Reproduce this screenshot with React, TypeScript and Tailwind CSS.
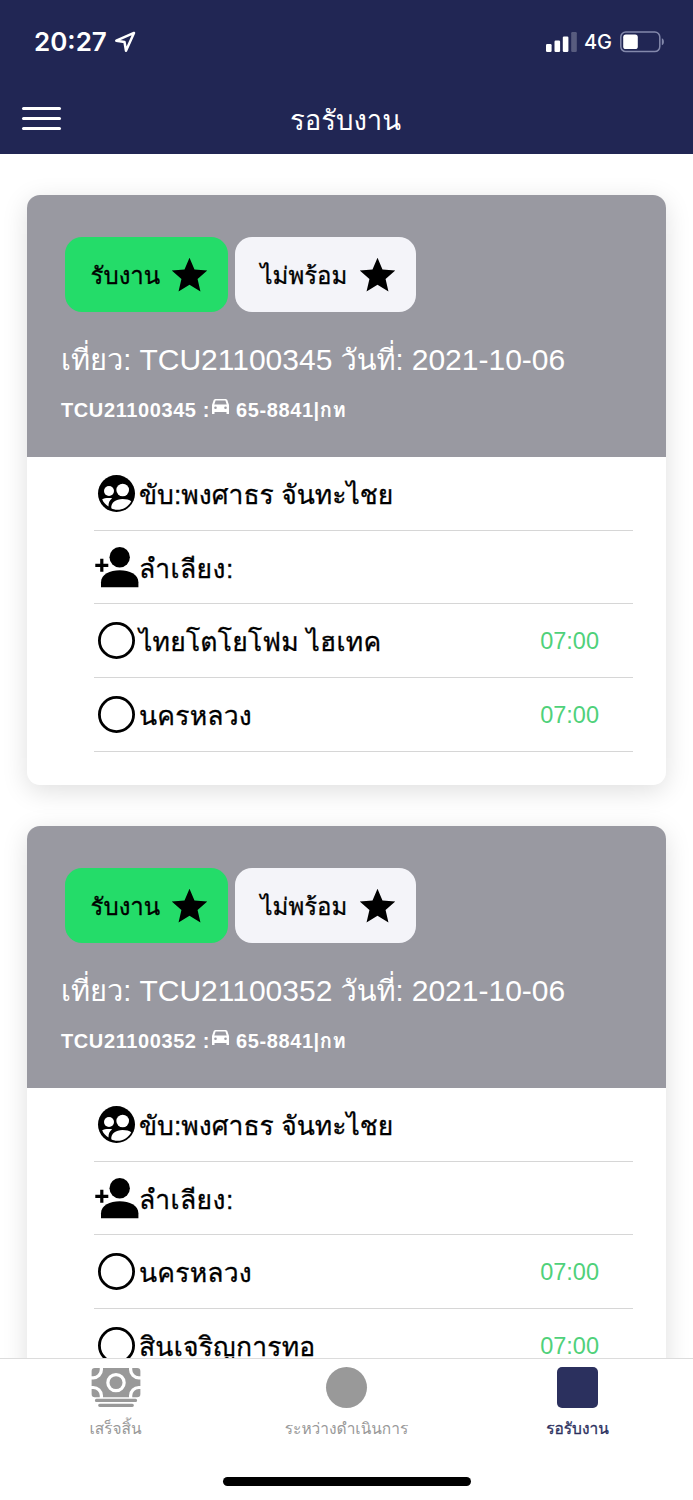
import React from "react";
import { IoMdStar } from "react-icons/io";
import { IoCash } from "react-icons/io5";

interface Stop {
  name: string;
  time: string;
}

interface Job {
  trip: string;
  date: string;
  plate: string;
  driver: string;
  stops: Stop[];
}

const jobs: Job[] = [
  {
    trip: "TCU21100345",
    date: "2021-10-06",
    plate: "65-8841|กท",
    driver: "พงศาธร จันทะไชย",
    stops: [
      { name: "ไทยโตโยโฟม ไฮเทค", time: "07:00" },
      { name: "นครหลวง", time: "07:00" },
    ],
  },
  {
    trip: "TCU21100352",
    date: "2021-10-06",
    plate: "65-8841|กท",
    driver: "พงศาธร จันทะไชย",
    stops: [
      { name: "นครหลวง", time: "07:00" },
      { name: "สินเจริญการทอ", time: "07:00" },
    ],
  },
];

function DriverIcon() {
  return (
    <svg className="size-[45px] shrink-0" viewBox="0 0 45 45">
      <circle cx="22.5" cy="22.5" r="18.5" fill="black" />
      <g fill="white">
        <circle cx="28.7" cy="19" r="6.3" />
        <circle cx="15" cy="20" r="5" />
        <path d="M8.2 28.3c2-1.2 6.2-1.8 10-1-2.8 2-3.8 4.7-3.7 8.200-3-1.700-5.200-4.200-6.300-7.200z" />
        <path d="M17.300 37.300c-.6-5.800 4.700-9.300 11.200-9.300 3.800 0 7 .8 8.700 2.200-2.800 5.400-7.600 8.400-13.700 8.600-2.300.1-4.300-.5-6.200-1.500z" />
      </g>
    </svg>
  );
}

function HelperIcon() {
  return (
    <svg className="size-[45px] shrink-0" viewBox="0 0 45 45" fill="black">
      <circle cx="25.7" cy="12.2" r="10.2" />
      <path d="M7 42.2v-5c0-8 9-12 18.700-12s18.700 4 18.700 12v5z" />
      <path d="M6.200 13.800h3.200v4.900h4.900v3.200H9.400v4.900H6.200v-4.900H1.300v-3.200h4.900z" />
    </svg>
  );
}

function CarIcon() {
  return (
    <svg className="mb-[6px] ml-[2px] h-[15px] w-[17px]" viewBox="0 0 17 15" fill="white" fillRule="evenodd">
      <path d="M3.200 0h10.600l1.400.8L17 6v9h-2.500v-2h-12v2H0V6L1.800.8zM3.600 1.600 2.300 5.500h12.400l-1.300-3.900zM3.500 7.500a1.300 1.300 0 1 0 0 2.600 1.300 1.300 0 0 0 0-2.600zm10 0a1.300 1.300 0 1 0 0 2.600 1.300 1.300 0 0 0 0-2.600z" />
    </svg>
  );
}

function StatusBar() {
  return (
    <div className="flex h-[84px] items-center pl-[34px] pr-[28px] text-white">
      <span className="font-[Inter] text-[26px] font-semibold leading-none">20:27</span>
      <svg className="ml-[7px] size-[22px]" viewBox="0 0 22 22" fill="none" stroke="white" strokeWidth="2.5" strokeLinejoin="round">
        <path d="M20 1.900 2.300 9.700l8.200 1.300 1.500 8.700z" />
      </svg>
      <div className="ml-auto flex items-center">
        <svg className="h-[20px] w-[31px]" viewBox="0 0 31 20" fill="white">
          <rect x="0" y="12" width="5.6" height="8" rx="1.2" />
          <rect x="8.5" y="8.5" width="5.6" height="11.5" rx="1.2" />
          <rect x="16.8" y="4.5" width="5.6" height="15.5" rx="1.2" />
          <rect x="25.2" y="0" width="5.6" height="20" rx="1.2" opacity=".25" />
        </svg>
        <span className="ml-[7px] font-[Inter] text-[20px] font-medium leading-none">4G</span>
        <svg className="ml-[8px] h-[22px] w-[45px]" viewBox="0 0 45 22">
          <rect x=".8" y="1" width="39" height="19.6" rx="5" fill="none" stroke="#8388ab" strokeWidth="1.5" />
          <rect x="3.2" y="3.6" width="14.6" height="14.4" rx="2.6" fill="white" />
          <path d="M41.8 7.3c2.8.8 2.8 6.2 0 7z" fill="#8388ab" />
        </svg>
      </div>
    </div>
  );
}

function Header() {
  return (
    <header className="h-[154px] shrink-0 bg-[#212654]">
      <StatusBar />
      <div className="grid h-[70px] grid-cols-[1fr_auto_1fr] items-center px-[22px]">
        <div className="mb-px flex w-[39px] flex-col gap-[7px]">
          <span className="h-[3px] rounded-full bg-white" />
          <span className="h-[3px] rounded-full bg-white" />
          <span className="h-[3px] rounded-full bg-white" />
        </div>
        <h1 className="-ml-[2px] pt-[3px] text-[27.5px] leading-none text-white">รอรับงาน</h1>
      </div>
    </header>
  );
}

function ActionButton({ label, className }: { label: string; className: string }) {
  return (
    <button
      className={`flex h-[75px] items-center justify-between rounded-[17px] pl-[26px] pr-[16px] text-[24px] leading-none text-black [-webkit-text-stroke:0.3px] ${className}`}
    >
      <span className="pt-[3px]">{label}</span>
      <IoMdStar className="size-[45px]" />
    </button>
  );
}

function JobCard({ job }: { job: Job }) {
  return (
    <article className="h-[590.5px] shrink-0 overflow-hidden rounded-[13px] bg-white shadow-[0_6px_26px_rgba(0,0,0,0.13)]">
      <div className="h-[262.5px] bg-[#9999a1] pt-[42px]">
        <div className="flex gap-[7px] pl-[37.5px]">
          <ActionButton label="รับงาน" className="w-[163px] bg-[#24dc69]" />
          <ActionButton label="ไม่พร้อม" className="w-[181.5px] bg-[#f4f4f9]" />
        </div>
        <h2 className="mt-[30px] whitespace-nowrap pl-[34px] text-[29px] leading-[36px] text-white">
          เที่ยว: <span className="text-[30px]">{job.trip}</span> วันที่: <span className="text-[30px]">{job.date}</span>
        </h2>
        <p className="mt-[20px] flex items-center whitespace-nowrap pl-[34px] text-[20px] font-bold leading-[24px] tracking-[0.6px] text-white">
          <span>{job.trip} :</span>
          <CarIcon />
          <span className="ml-[7px]">{job.plate}</span>
        </p>
      </div>
      <div className="ml-[67px] mr-[33px] text-[26.5px] leading-none text-black">
        <div className="flex h-[73.7px] items-center border-b border-[#d6d6d6]">
          <DriverIcon />
          <span className="pt-[4px] [-webkit-text-stroke:0.3px]">ขับ:{job.driver}</span>
        </div>
        <div className="flex h-[73.7px] items-center border-b border-[#d6d6d6]">
          <HelperIcon />
          <span className="pt-[4px] tracking-[0.4px] [-webkit-text-stroke:0.3px]">ลำเลียง:</span>
        </div>
        {job.stops.map((stop) => (
          <div key={stop.name} className="flex h-[73.7px] items-center border-b border-[#d6d6d6]">
            <svg className="size-[45px] shrink-0" viewBox="0 0 45 45" fill="none" stroke="black" strokeWidth="2.8">
              <circle cx="22.5" cy="22.5" r="17.1" />
            </svg>
            <span className="pt-[4px] tracking-[0.2px] [-webkit-text-stroke:0.3px]">{stop.name}</span>
            <span className="ml-auto mr-[34px] pt-[2px] text-[23.5px] text-[#4fd17a]">{stop.time}</span>
          </div>
        ))}
      </div>
    </article>
  );
}

function TabBar() {
  return (
    <nav className="h-[142px] shrink-0 border-t border-[#dcdcdc] bg-white">
      <div className="grid h-[118px] grid-cols-3 pt-[8px] text-[15.5px] leading-none text-[#999999]">
        <div className="flex flex-col items-center gap-[13px]">
          <IoCash className="h-[41px] w-[50px]" viewBox="10 54 492 404" preserveAspectRatio="none" />
          <span>เสร็จสิ้น</span>
        </div>
        <div className="flex flex-col items-center gap-[13px]">
          <span className="size-[41px] rounded-full bg-[#999999]" />
          <span>ระหว่างดำเนินการ</span>
        </div>
        <div className="flex flex-col items-center gap-[13px] text-[#2b305e]">
          <span className="size-[41px] rounded-[5px] bg-[#2b305e]" />
          <span className="[-webkit-text-stroke:0.3px]">รอรับงาน</span>
        </div>
      </div>
      <div className="mx-auto h-[9px] w-[248px] rounded-full bg-black" />
    </nav>
  );
}

export default function App() {
  return (
    <div className="flex h-[1500px] w-[693px] flex-col overflow-hidden bg-white font-['Liberation_Sans','Loma',serif]">
      <Header />
      <main className="flex min-h-0 flex-1 flex-col gap-[40.5px] overflow-hidden px-[27px] pt-[40.5px]">
        {jobs.map((job) => (
          <JobCard key={job.trip} job={job} />
        ))}
      </main>
      <TabBar />
    </div>
  );
}
